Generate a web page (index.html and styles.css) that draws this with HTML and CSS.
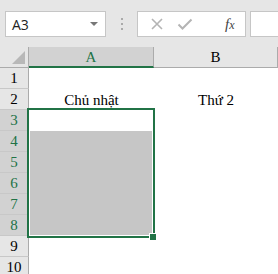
FILE: index.html
```html
<!DOCTYPE html>
<html lang="vi">
<head>
  <meta charset="UTF-8">
  <meta name="viewport" content="width=device-width, initial-scale=1.0">
  <title>Sheet1</title>
  <link rel="stylesheet" href="styles.css">
</head>
<body>
  <div class="toolbar">
    <div class="namebox">
      <span class="ref">A3</span>
      <span class="caret"></span>
    </div>
    <div class="grip"><i></i><i></i><i></i></div>
    <div class="fxbox">
      <svg class="ico" width="14" height="14" viewBox="0 0 14 14"><path d="M2 2 L12 12 M12 2 L2 12" stroke="#b4b4b4" stroke-width="1.6" fill="none"/></svg>
      <svg class="ico" width="16" height="14" viewBox="0 0 16 14"><path d="M1.5 7.5 L5.5 11.5 L14.5 2.5" stroke="#b4b4b4" stroke-width="2" fill="none"/></svg>
      <span class="fx">f<span class="x">x</span></span>
    </div>
    <div class="formula"></div>
  </div>

  <div class="sheet">
    <div class="corner"><span class="tri"></span></div>
    <div class="colhead sel">A</div>
    <div class="colhead">B</div>

    <div class="rowhead">1</div><div class="cell"></div><div class="cell"></div>
    <div class="rowhead">2</div><div class="cell">Chủ nhật</div><div class="cell">Thứ 2</div>
    <div class="rowhead sel">3</div><div class="cell"></div><div class="cell"></div>
    <div class="rowhead sel">4</div><div class="cell gray"></div><div class="cell"></div>
    <div class="rowhead sel">5</div><div class="cell gray"></div><div class="cell"></div>
    <div class="rowhead sel">6</div><div class="cell gray"></div><div class="cell"></div>
    <div class="rowhead sel">7</div><div class="cell gray"></div><div class="cell"></div>
    <div class="rowhead sel">8</div><div class="cell gray"></div><div class="cell"></div>
    <div class="rowhead">9</div><div class="cell"></div><div class="cell"></div>
    <div class="rowhead">10</div><div class="cell"></div><div class="cell"></div>

    <div class="selection"><span class="handle"></span></div>
  </div>
</body>
</html>
```

FILE: styles.css
```css
* { box-sizing: border-box; margin: 0; padding: 0; }
body { background: #fff; overflow: hidden; }

.toolbar {
  height: 47px;
  background: #e6e6e6;
  display: flex;
  align-items: flex-start;
  padding: 11px 0 0 5px;
}
.namebox, .fxbox, .formula {
  height: 26px;
  background: #fff;
  border: 1px solid #c6c6c6;
}
.namebox {
  width: 101px;
  display: flex;
  align-items: center;
  justify-content: space-between;
  padding: 0 6px 0 6px;
}
.ref { font-family: "Open Sans", sans-serif; font-size: 14px; color: #222; }
.caret {
  width: 0; height: 0;
  border-left: 4px solid transparent;
  border-right: 4px solid transparent;
  border-top: 4px solid #777;
  margin-right: 1px;
}
.grip {
  width: 31px;
  height: 26px;
  display: flex;
  flex-direction: column;
  align-items: center;
  justify-content: center;
  gap: 3px;
}
.grip i { width: 2px; height: 2px; background: #aaa; display: block; }
.fxbox {
  width: 109px;
  display: flex;
  align-items: center;
  padding-left: 12px;
}
.ico { display: block; }
.fxbox .ico + .ico { margin-left: 13px; }
.fx {
  margin-left: 32px;
  font-family: "Liberation Serif", serif;
  font-style: italic;
  font-size: 15px;
  color: #444;
}
.fx .x { font-size: 12px; }
.formula { margin-left: 4px; flex: 1; border-right: none; }

.sheet {
  position: relative;
  display: grid;
  grid-template-columns: 29px 125px 1fr;
  grid-template-rows: 21px repeat(10, 21px);
  font-family: "Liberation Serif", serif;
  font-size: 15px;
  color: #000;
}
.corner {
  position: relative;
  background: #e6e6e6;
  border-right: 1px solid #ababab;
  border-bottom: 1px solid #ababab;
}
.tri {
  position: absolute;
  right: 3px;
  bottom: 3px;
  width: 0; height: 0;
  border-left: 13px solid transparent;
  border-bottom: 13px solid #b8b8b8;
}
.colhead {
  background: #e6e6e6;
  border-right: 1px solid #ababab;
  border-bottom: 1px solid #ababab;
  display: flex;
  align-items: center;
  justify-content: center;
  padding-top: 1px;
}
.colhead.sel {
  background: #d2d2d2;
  color: #217346;
  border-bottom: 2px solid #217346;
}
.rowhead {
  background: #e6e6e6;
  border-right: 1px solid #ababab;
  border-bottom: 1px solid #c8c8c8;
  display: flex;
  align-items: center;
  justify-content: center;
}
.rowhead.sel { background: #d2d2d2; color: #217346; }
.cell {
  display: flex;
  align-items: flex-end;
  justify-content: center;
  line-height: 17px;
  padding-bottom: 1px;
}
.cell.gray { background: #c6c6c6; }

.selection {
  position: absolute;
  left: 27px;
  top: 61px;
  width: 128px;
  height: 130px;
  border: 2px solid #217346;
  box-shadow: inset 0 0 0 1px #fff;
}
.handle {
  position: absolute;
  right: -4px;
  bottom: -5px;
  width: 8px;
  height: 8px;
  background: #217346;
  border: 1px solid #fff;
}
```
